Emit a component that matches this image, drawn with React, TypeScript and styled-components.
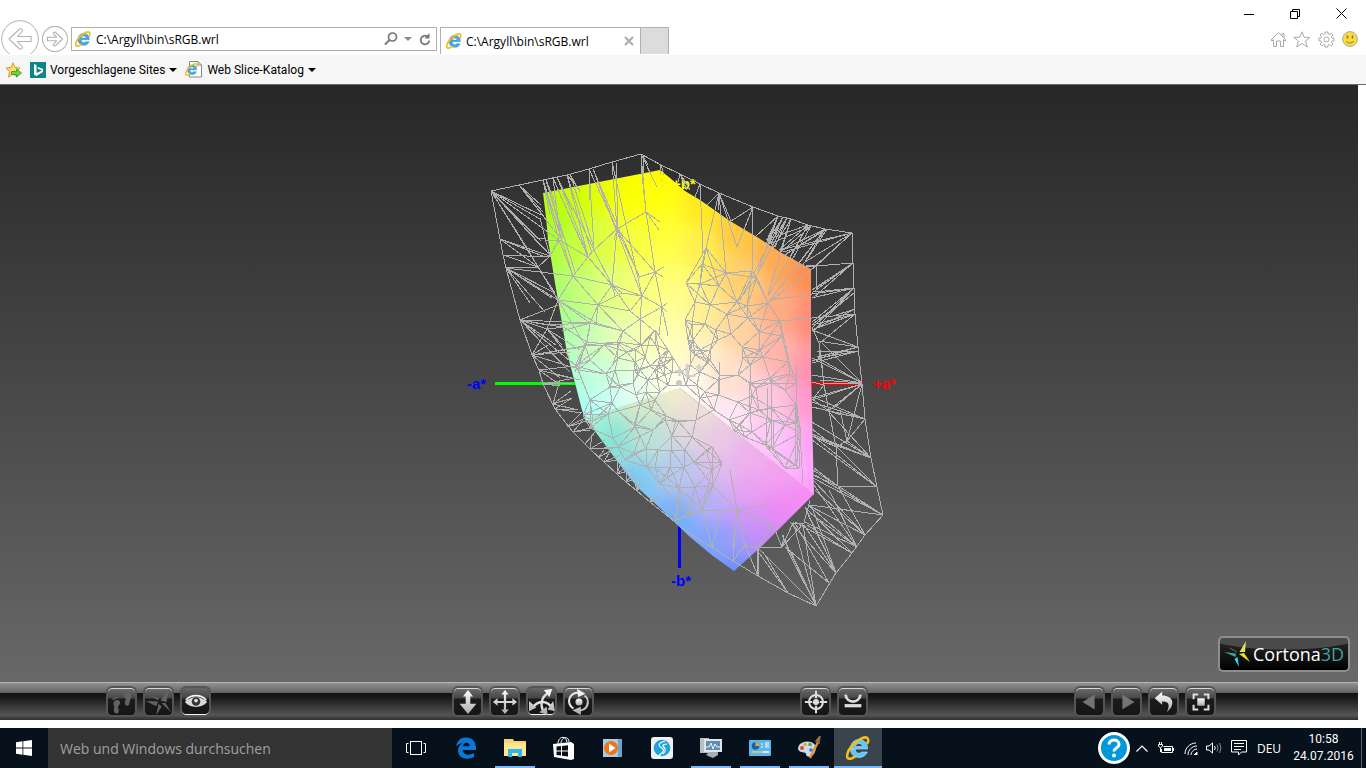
import React from "react";
import styled, { createGlobalStyle, css } from "styled-components";

const GlobalStyle = createGlobalStyle`
  *, *::before, *::after { box-sizing: border-box; }
  html, body { margin: 0; background: #fff; }
  body { font-family: "Open Sans", "Noto Sans", sans-serif; font-size: 12px; color: #000; }
  button, input { font: inherit; color: inherit; margin: 0; padding: 0; border: 0; background: none; }
  button { display: flex; align-items: center; justify-content: center; }
  svg { display: block; flex: none; }
`;

/* ---------- browser chrome ---------- */

const Page = styled.div`
  display: flex;
  flex-direction: column;
  min-height: 100vh;
`;

const Header = styled.header`
  display: flex;
  align-items: flex-start;
  height: 54px;
  margin-bottom: 1px;
  overflow: hidden;
`;

const HistoryButtons = styled.nav`
  display: flex;
  align-items: center;
  gap: 3px;
  padding: 20px 3px 0 1px;
`;

const AddressBar = styled.div`
  display: flex;
  align-items: center;
  gap: 1px;
  flex: 0 1 366px;
  height: 24px;
  margin-top: 27px;
  padding: 0 3px;
  border: 1px solid #b0b0b0;
`;

const AddressInput = styled.input`
  flex: 1;
  min-width: 0;
  margin-left: 4px;
  outline: none;
`;

const AddressTool = styled.button`
  width: 16px;
  height: 22px;
`;

const Tabs = styled.div`
  display: flex;
  flex: 1;
  align-self: stretch;
  margin: 27px 0 0 3px;
`;

const Tab = styled.div`
  display: flex;
  align-items: center;
  gap: 4px;
  width: 201px;
  padding: 0 5px;
  border: 1px solid #b0b0b0;
  border-bottom: 0;
`;

const TabTitle = styled.button`
  flex: 1;
  justify-content: flex-start;
`;

const NewTab = styled.button`
  width: 28px;
  background: #dcdcdc;
  border: solid #b0b0b0;
  border-width: 1px 1px 0 0;
`;

const WindowTools = styled.div`
  display: flex;
  flex-direction: column;
  align-items: flex-end;
`;

const Caption = styled.div`
  display: flex;
  padding-right: 2px;
  button { width: 46px; height: 27px; }
`;

const CommandIcons = styled.div`
  display: flex;
  padding-right: 4px;
  button { width: 24px; height: 24px; }
`;

const FavoritesBar = styled.nav`
  display: flex;
  align-items: center;
  height: 30px;
  padding-left: 5px;
  background: #f6f6f6;
  border-bottom: 1px solid #6a6a6a;
`;

const Favorite = styled.button`
  gap: 4px;
  margin-left: 8px;
  font-family: Roboto, sans-serif;
  white-space: nowrap;
`;

/* ---------- viewer ---------- */

const Plugin = styled.main`
  display: flex;
  flex-direction: column;
  flex: 1;
  margin: 0 8px 8px 0;
`;

const Viewport = styled.section`
  position: relative;
  display: flex;
  align-items: center;
  justify-content: center;
  flex: 1;
  background: linear-gradient(#272727, #686868);
`;

const Brand = styled.a`
  position: absolute;
  right: 8px;
  bottom: 10px;
  display: flex;
  align-items: center;
  gap: 1px;
  width: 132px;
  height: 36px;
  padding-left: 4px;
  border: 2px solid #8e8e8e;
  border-radius: 5px;
  background: radial-gradient(ellipse 90px 20px at 50% -8px, #4a4a4a 96%, transparent), linear-gradient(#2b2b2b, #000);
  color: #fff;
  font: 18px/1 "Open Sans", sans-serif;
  text-decoration: none;
  white-space: nowrap;
  b { font-weight: 400; color: #3fa39b; }
`;

const Toolbar = styled.div`
  display: flex;
  height: 38px;
  padding: 3px 142px 0 106px;
  border-top: 1px solid #b4b4b4;
  background: linear-gradient(#929292, #606060 10px, #121212 10px, #1a1a1a 15px, #555 32px, #303030);
`;

const ToolGroup = styled.div`
  display: flex;
  gap: 6px;
`;

const Spacer = styled.div<{ $grow: number }>`
  flex: ${(p) => p.$grow} 0 0;
`;

const ToolButton = styled.button<{ $pressed?: boolean }>`
  width: 31px;
  height: 31px;
  border: 2px solid #555;
  border-radius: 6px;
  background: linear-gradient(#6e6e6e, #464646 10px, #1b1b1b 11px, #161616);
  box-shadow: inset 0 1px 0 #d8d8d8;
  ${(p) =>
    p.$pressed &&
    css`
      background: linear-gradient(#666, #444 10px, #1b1b1b 11px, #161616);
      box-shadow: inset 0 -1px 0 #f4f4f4;
    `}
`;

/* ---------- taskbar ---------- */

const Taskbar = styled.footer`
  display: flex;
  height: 40px;
  background: #06111b;
  color: #fff;
`;

const StartButton = styled.button`
  width: 48px;
`;

const Search = styled.input`
  flex: 0 1 344px;
  min-width: 0;
  padding: 0 12px;
  background: #333;
  font: 14px "Open Sans", sans-serif;
  outline: none;
  &::placeholder { color: #a0a0a0; opacity: 1; }
`;

const Apps = styled.div`
  display: flex;
  gap: 1px;
  flex: 1;
`;

const AppButton = styled.button<{ $running?: boolean; $active?: boolean }>`
  position: relative;
  width: 48px;
  background: ${(p) => (p.$active ? "#39444d" : "transparent")};
  &:first-child { margin-right: 1px; }
  &::after {
    content: "";
    position: absolute;
    bottom: 0;
    left: ${(p) => (p.$active ? 0 : 4)}px;
    right: ${(p) => (p.$active ? 0 : 4)}px;
    height: ${(p) => (p.$running || p.$active ? 2 : 0)}px;
    background: #76b9ff;
  }
`;

const Tray = styled.div`
  display: flex;
  align-items: center;
`;

const TrayButton = styled.button<{ $width?: number }>`
  width: ${(p) => p.$width ?? 24}px;
  height: 40px;
`;

const Clock = styled.time`
  width: 75px;
  margin-left: 2px;
  font: 12px/17px Roboto, sans-serif;
  text-align: center;
  white-space: nowrap;
`;

const ShowDesktop = styled.button`
  width: 5px;
  height: 40px;
  border-left: 1px solid #59636b;
`;

/* ---------- icons ---------- */

const IeIcon = ({ size = 16, bright = false }: { size?: number; bright?: boolean }) => (
  <svg width={size} height={size} viewBox="0 0 24 24" fill="none">
    <path d="M4.500 13H21.500C22 7 18 3.500 13 3.500C8 3.500 4.500 7.500 4.500 12.500C4.500 18 8 21.500 13 21.500C17 21.500 20 19.500 21.300 16H15.800C13 18.500 9.500 17 9.300 13.500Z M9.400 10.500C10 6.500 16 6.500 16.600 10.500Z" fillRule="evenodd" fill={bright ? "#5cc8f6" : "#4aa8e4"} stroke={bright ? "#bdeaff" : "#2b86c8"} strokeWidth=".6" />
    <path d="M21.500 7C23.500 2.500 21 .3 16.500 2C10.500 4.300 2.500 12 1.200 18.500C.2 23.500 4.500 24 9 20.500" stroke="#f4bd1c" strokeWidth="2.600" strokeLinecap="round" />
  </svg>
);

const ArrowCircle = ({ size, flip }: { size: number; flip?: boolean }) => (
  <svg width={size} height={size} viewBox="0 0 38 38" fill="none" stroke="#b2b2b2">
    <circle cx="19" cy="19" r="18.300" strokeWidth={size < 30 ? 1.500 : 1} />
    <path transform={flip ? "translate(38 0) scale(-1 1)" : undefined} strokeWidth={size < 30 ? 1.600 : 1.100} strokeLinejoin="round" d="M8 19L18 9.500C20 7.800 22.500 9.500 21 11.500L16.500 16.500H30V21.500H16.500L21 26.500C22.500 28.500 20 30.200 18 28.500Z" />
  </svg>
);

const Caret = ({ color }: { color: string }) => (
  <svg width="8" height="4" viewBox="0 0 8 4"><path d="M0 0H8L4 4Z" fill={color} /></svg>
);

const steel = "url(#steel)";

const FourWay = "M14 1L18 6H15.200V12.800H22V10L27 14L22 18V15.200H15.200V22H18L14 27L10 22H12.800V15.200H6V18L1 14L6 10V12.800H12.800V6H10Z";

const tools: Record<string, React.ReactNode> = {
  walk: (
    <g fill="#626262">
      <path d="M16 5C19 2 24 3 24 8C24 11 22 12 22 15C22 19 17 19 17 15C17 12 20 11 16 8Z" />
      <path d="M5 14C7 11 12 11 12 15C11 18 9 18 10 21C12 26 8 28 6 25C4 22 7 20 5 17Z" />
      <circle cx="15.500" cy="3" r="1.200" /><circle cx="18.500" cy="1.600" r="1.200" /><circle cx="5" cy="11" r="1.200" /><circle cx="8" cy="9.800" r="1.200" />
    </g>
  ),
  fly: (
    <g fill="#626262">
      <path d="M15.500 12.500L25 0L22 14Z" /><path d="M13 13.500L0 13L11 18.500Z" /><path d="M13.500 16L11 28L17 19Z" /><path d="M16.500 15L27 25L21 15Z" /><path d="M13 12L4 7L14 10Z" />
    </g>
  ),
  study: (
    <g>
      <path d="M2 14C8 7 20 7 26 14C20 21 8 21 2 14Z" fill="#d8d8d8" /><path d="M3 12C8 5.500 20 5.500 25 12" fill="none" stroke="#f4f4f4" strokeWidth="1.800" />
      <circle cx="14" cy="13.500" r="4.600" fill="#333" /><circle cx="14" cy="12.500" r="2" fill="#ddd" />
    </g>
  ),
  plan: <path d="M14 1L19.500 8H16.500V16H23L14 27L5 16H11.500V8H8.500Z" fill={steel} />,
  pan: <path d={FourWay} fill={steel} />,
  turn: (
    <g>
      <path d="M21 4C14 8 11 16 16 25" fill="none" stroke="#e0e0e0" strokeWidth="2.600" />
      <path d="M4 20C9 13 18 11 25 20" fill="none" stroke="#e0e0e0" strokeWidth="2.600" />
      <path d="M16 1L25 0L22 9Z M0 13L8 20L0 24Z M20 22L26 13L28 24Z M11 25L19 19L20 28Z" fill={steel} />
    </g>
  ),
  roll: (
    <g>
      <circle cx="14" cy="14" r="3.800" fill={steel} />
      <path d="M15 4.500A9 9 0 0 0 8 21" fill="none" stroke="#e8e8e8" strokeWidth="2.200" /><path d="M13 23A9 9 0 0 0 20 7" fill="none" stroke="#c8c8c8" strokeWidth="2.200" />
      <path d="M12 0L21 5L13 9Z M16 19L7 23L16 28Z" fill={steel} />
    </g>
  ),
  goto: (
    <g fill="none" stroke="#ddd" strokeWidth="2.200">
      <circle cx="14" cy="14" r="7.500" /><path d="M14 2V10M14 18V26M2 14H10M18 14H26" /><circle cx="14" cy="14" r="2.200" fill="#ddd" />
    </g>
  ),
  align: <g fill="none" stroke="#ddd"><path d="M6 6C7 16 21 16 22 6" strokeWidth="3" /><path d="M5 18H23" strokeWidth="3.500" /></g>,
  prev: <path d="M6 14L19 6V22Z" fill="#747474" />,
  next: <path d="M22 14L9 6V22Z" fill="#747474" />,
  undo: <path d="M4 10L12 3V7C24 7 27 17 17 25C21 17 19 13 12 13.500V17Z" fill={steel} />,
  fit: <g><path d="M6 11V6H11M17 6H22V11M22 17V22H17M11 22H6V17" fill="none" stroke="#ddd" strokeWidth="2.200" /><rect x="10" y="10" width="8" height="8" fill={steel} /></g>,
};

const Tool = ({ name, label, pressed, disabled }: { name: string; label: string; pressed?: boolean; disabled?: boolean }) => (
  <ToolButton $pressed={pressed} aria-label={label} disabled={disabled}>
    <svg width="26" height="26" viewBox="0 0 28 28">{tools[name]}</svg>
  </ToolButton>
);

/* ---------- gamut scene ---------- */

type Sample = [number, number, string];

/* Colours on the ridge that the yellow and the orange face share. */
const ridge: Sample[] = [
  [662, 175, "fffa00"], [664, 200, "ffff10"], [667, 225, "ffff30"], [670, 250, "ffff4c"], [672, 275, "ffff70"],
  [674, 300, "ffff90"], [676, 325, "ffffa8"], [677, 350, "ffffc4"], [679, 385, "fffff0"],
];

const faces: { id: string; outline: string; box: [number, number, number, number]; samples: Sample[] }[] = [
  {
    id: "yellow-green",
    box: [535, 160, 690, 430],
    outline: "543,193 660,170 665,200 681,388 586,420 582,410 575,383 567,353 562,323 555,283 548,240 546,217",
    samples: [
      ...ridge,
      [545, 195, "b8ff00"], [570, 190, "ccff00"], [600, 185, "e8ff00"], [630, 180, "f8ff00"], [640, 200, "ffff08"],
      [548, 220, "acff18"], [548, 245, "a8ff38"], [575, 245, "c4ff40"], [600, 240, "deff44"], [630, 240, "f6ff40"],
      [556, 290, "a8ff70"], [582, 290, "c8ff78"], [610, 290, "e4ff80"], [640, 290, "f8ff78"], [562, 320, "aaff94"],
      [565, 345, "aeffb4"], [592, 345, "ccffb8"], [620, 340, "e8ffb8"], [648, 340, "faffb0"], [575, 380, "acffd8"],
      [583, 410, "a4fff8"], [600, 375, "ccffdc"], [605, 402, "c4fff8"], [635, 392, "e4fff0"], [655, 375, "f8ffe0"],
    ],
  },
  {
    id: "orange-pink",
    box: [655, 160, 820, 500],
    outline: "660,170 670,178 685,191 700,200 730,221 757,237 780,252 811,269 811,370 814,495 680,388 664,200",
    samples: [
      ...ridge,
      [700, 205, "ffe820"], [740, 230, "ffc840"], [780, 255, "ffa850"], [810, 272, "ff8c50"], [811, 320, "ff8878"],
      [811, 370, "ff90b0"], [811, 400, "ff98d0"], [812, 450, "ffa0f8"], [812, 485, "ffa0ff"], [695, 250, "fff050"],
      [740, 280, "ffd070"], [780, 310, "ffac80"], [700, 310, "ffee90"], [740, 330, "ffd4a0"], [780, 350, "ffb4a8"],
      [700, 355, "fff0cc"], [730, 380, "ffe0d0"], [770, 400, "ffc8e0"], [692, 388, "fff8f0"], [730, 415, "ffe8f8"],
      [770, 440, "ffc8fc"], [790, 462, "ffb8ff"],
    ],
  },
  {
    id: "blue-magenta",
    box: [575, 380, 825, 580],
    outline: "680,388 814,494 800,508 780,528 763,545 734,571 713,556 690,537 670,518 660,508 637,487 617,461 603,442 585,418",
    samples: [
      [590, 420, "a0f4d4"], [640, 402, "d0ecc8"], [675, 392, "f0eccc"], [700, 405, "f2e0d8"], [610, 445, "84e4d8"],
      [650, 440, "b8e4d8"], [690, 430, "e4d8dc"], [635, 482, "7cc8f4"], [680, 470, "b8c8f0"], [720, 440, "ecc8e4"],
      [675, 520, "70b0fc"], [710, 500, "b8b0f8"], [720, 470, "e0bcee"], [750, 460, "f0b0ec"], [780, 475, "f4a0f0"],
      [750, 490, "eca0f2"], [812, 494, "f68cf4"], [780, 510, "f088f4"], [750, 520, "d494f8"], [710, 545, "7ca4fc"],
      [734, 568, "6c90fc"], [765, 540, "c488f8"], [735, 540, "9c9cfa"],
    ],
  },
];

const CELL = 8;

/* Inverse distance weighting of the colour samples of a face. */
const colourAt = (x: number, y: number, samples: Sample[]) => {
  let total = 0;
  const sum = [0, 0, 0];
  for (const [sx, sy, hex] of samples) {
    const weight = 1 / Math.pow((x - sx) ** 2 + (y - sy) ** 2 + 220, 2.2);
    total += weight;
    for (let i = 0; i < 3; i++) sum[i] += weight * parseInt(hex.slice(i * 2, i * 2 + 2), 16);
  }
  return `rgb(${sum.map((v) => Math.round(v / total)).join(",")})`;
};

const cells = (face: (typeof faces)[number]) => {
  const [x0, y0, x1, y1] = face.box;
  const out: React.ReactNode[] = [];
  for (let y = y0 - CELL; y < y1 + CELL; y += CELL)
    for (let x = x0 - CELL; x < x1 + CELL; x += CELL)
      out.push(<rect key={`${x}-${y}`} x={x} y={y} width={CELL + 1} height={CELL + 1} fill={colourAt(x + CELL / 2, y + CELL / 2, face.samples)} />);
  return out;
};

const hull =
  "M491 191L519 185L543 180L567 175L589 169L612 162L641 154L661 165L680 174L700 184L719 193L753 207L778 216L791 219L808 225L825 229L852 233L853 263L854 288L855 314L858 347L862 384L865 419L871 458L877 487L883 515L865 535L852 553L836 573L816 606L788 593L758 576L733 561L712 547L690 534L675 522L650 502L637 491L626 482L617 474L604 462L590 449L573 432L555 409L543 384L539 370L532 355L520 320L506 268L503 255L500 239Z";

/* Each line is a vertex followed by the vertices that it is joined to. */
const fans = `
491,191 541,215 540,219 538,239 541,241 542,247 538,267 527,248 559,240 550,255
519,185 545,218 560,238 543,212 541,205
500,239 550,256 538,267 527,248 545,257
538,239 546,238
503,255 538,267 551,257
506,268 540,267 558,300 555,293 552,298 573,276 545,312 530,303
538,267 558,300 550,256 527,248 555,293 557,298
545,238 538,239 550,256 540,218
520,320 558,305 547,329 590,323 562,327 575,365 570,372 556,345 547,325
547,329 558,300 532,355 562,345 580,350 570,358 565,327
532,355 548,345 590,345 582,347 570,352 575,368 560,378
539,370 575,366 560,385 580,380 570,378
543,180 559,240 573,276 550,215 562,240
546,180 563,238 575,272 556,205
553,178 588,257 580,240 560,236
557,177 588,255 594,250 572,210
567,175 592,253 588,257 580,190
570,174 594,248 580,192 577,187
589,169 594,248 617,229 590,200
593,169 616,230 642,296 640,278
612,162 617,229 642,296
616,162 618,228
641,154 641,173 646,212 657,187
643,156 643,175 648,165
617,229 612,285 646,212 594,250 640,278 655,272 614,240
646,212 660,222 659,230 655,272 642,175
655,272 664,267 663,277 642,296 639,277 662,307
559,240 550,256 573,276 545,241 588,257 553,250
594,250 588,257 612,285
588,257 573,276 612,285
573,276 612,285 558,300 598,305
612,285 598,305 630,311 642,296 622,293 615,296
598,305 558,300 622,293 590,323 596,323 630,311 623,331
642,296 630,311 640,319 662,307 622,293
662,307 640,319 667,303 667,312 659,335 668,336
640,319 630,311 623,331 641,345 659,335
558,300 547,329 590,323 585,345 596,323
590,323 596,323 623,331 587,340 547,325 562,331
587,342 582,347 590,325 618,345 578,365 560,325 575,372
623,331 617,342 613,365 641,345 596,323
661,165 660,170 664,175
680,174 684,183 687,190 690,190 678,182
700,184 695,197 703,253 701,200
719,193 707,205 706,248 726,273 737,247 731,221 718,210
753,207 731,221 737,247 752,271
778,216 755,237 767,240 769,243 758,271 766,244
783,217 767,242 771,245 740,300
787,218 770,244 775,247 757,275
791,219 773,248 780,252 768,295
808,225 766,240 779,250 790,258 768,296
811,226 770,244 792,260 781,252
825,229 782,250 800,262 803,265 768,303 785,255
827,229 786,254 808,258
852,233 783,252 779,250 814,267 816,266 805,262
816,266 816,290 853,263 806,265 768,303 797,266
853,263 812,290 812,293 813,298 816,288
854,288 812,298 815,292 812,322 812,328 813,332 770,300
854,293 813,324 818,322
855,314 812,325 812,330 780,321 814,329 820,343
855,309 812,330 830,317
858,347 818,341 812,330 817,357 818,357 812,361
859,351 818,358 812,363 817,352
862,383 820,380 824,384 812,375 818,358 812,358 822,343
819,343 812,327 820,360 823,372 824,385
824,385 829,412 812,382 812,400
862,384 828,411 833,409 847,441 812,400 812,398
865,419 828,411 812,402 812,407 847,441 813,397
829,411 836,447 812,399 841,415
841,415 847,441 840,410
871,458 835,445 812,434 813,436 847,441 828,411 812,422
836,447 838,486 812,436 812,429 847,441
877,487 835,445 812,435 838,486 812,440 837,447
838,486 814,468 813,475
883,515 838,486 813,478 813,470 810,505 815,475
865,535 813,480 838,486 815,490 808,505
857,547 814,485 808,505 810,513 829,490 805,522
852,553 805,507 795,522 808,510 807,525
836,573 805,507 804,525 790,522 808,515 813,510
829,583 785,547 795,523
816,606 758,548 762,552 790,550 786,547 793,522 782,535 803,525
788,593 757,550 763,552
758,576 758,549 745,545 757,548
804,523 810,500 793,523 782,547
782,547 758,548 793,523 773,525 784,535
758,548 745,545 773,525
733,561 745,545 737,510 734,530
737,510 765,505 773,525 745,545 713,486 730,470 702,510 733,560
712,547 702,510 721,510 706,525
677,520 688,514 679,488 702,510 668,505
679,488 660,484 695,487 713,486 684,467 670,467 688,514
543,384 575,378 572,383 560,386 553,384
553,404 571,391 578,410 572,398 560,380
555,409 578,410 582,413 572,398
567,427 582,412 585,418 590,420
573,432 590,430 583,420 595,427
585,444 592,436 595,432
590,449 613,448 592,435 605,440 618,447
599,457 604,450 612,450
604,462 618,460 610,451 620,455
617,474 617,461 622,460 632,470 625,468
626,482 627,472 632,475 637,478
637,491 635,482 642,485 640,480
650,502 650,495 655,500 658,496
675,522 663,512 679,488
`;

/* Crowded vertices of the inner mesh, joined to their closest neighbours. */
const crowd = `
706,248 702,264 700,284 726,273 752,271 757,278 719,286 737,302 727,314 705,324 695,302 710,305 686,283 768,303
748,318 747,306 759,332 780,321 782,336 716,330 718,340 731,334 693,340 692,325 742,347 760,350 743,358 763,357
710,360 788,362 790,374 770,378 750,365 718,380 700,350 688,340 690,350 685,320 718,395 750,383 752,396 756,388
771,383 771,408 797,383 796,405 750,413 729,420 714,410 700,398 771,420 797,423 801,433 772,448 765,445 752,432
745,437 796,465 785,468 799,468 740,425 759,410 720,375 734,430 690,365 700,372 707,362 688,378 697,385 705,392
710,350 695,355 575,366 578,370 606,374 610,387 612,403 634,370 638,375 633,383 636,395 640,405 655,370 657,378
651,410 666,416 665,420 634,424 635,427 618,411 618,447 593,421 583,415 613,438 634,453 646,449 658,450 647,467
670,467 671,450 660,484 679,488 676,420 590,428 625,460 655,468 679,422 696,420 685,450 706,450 712,470
694,462 712,447 684,467 695,487 713,486 702,510 688,514 722,463 617,342
641,345 645,357 660,357 650,337 656,345 636,350 635,362 640,370 650,366 658,365 618,358 615,370 585,345 590,360
604,345 668,350 673,358 672,372 665,375 648,380 627,352 655,330 620,387 590,400 646,392 660,392 668,385
738,375 738,402 785,390 785,425 640,436 653,430 692,437 667,478 655,400 608,414 672,436
682,372 686,385 664,366
`;

/* Near-vertical doubled edges on the pink side. */
const strands = "M796 365V405L795 464M798 405L797 462M771 378V420M768 388L767 418L766 448M800 433L803 484M773 420V446M750 383L749 412M719 362V394M780 321L790 365L797 383";

const parse = (text: string) => text.trim().split(/\s+/).map((p) => p.split(",").map(Number));

const fanPath = fans
  .trim()
  .split("\n")
  .map((line) => {
    const [[hx, hy], ...ends] = parse(line);
    return ends.map(([x, y]) => `M${hx} ${hy}L${x} ${y}`).join("");
  })
  .join("");

const crowdPath = (() => {
  const points = parse(crowd);
  const seen = new Set<string>();
  let d = "";
  points.forEach(([x, y], i) => {
    points
      .map(([px, py], j) => ({ px, py, j, r: Math.hypot(px - x, py - y) }))
      .filter(({ px, py, j, r }) => j !== i && r < 42 && !(py < 350 && (px - 677) * (x - 677) < 0))
      .sort((a, b) => a.r - b.r)
      .slice(0, 5)
      .forEach(({ px, py, j }) => {
        const key = i < j ? `${i}-${j}` : `${j}-${i}`;
        if (seen.has(key)) return;
        seen.add(key);
        d += `M${x} ${y}L${px} ${py}`;
      });
  });
  return d;
})();

const AxisLabel = styled.text`
  font: bold 15px "Liberation Sans", sans-serif;
`;

const LightnessLabel = styled.text`
  font: bold 18px "Liberation Sans", sans-serif;
`;

const Gamut = () => (
  <svg width="440" height="481" viewBox="459 143 440 481" role="img" aria-label="sRGB gamut in L*a*b*">
    <defs>
      <filter id="smooth" x="-5%" y="-5%" width="110%" height="110%" colorInterpolationFilters="sRGB"><feGaussianBlur stdDeviation="5" /></filter>
      {faces.map((f) => (
        <clipPath id={f.id} key={f.id}><polygon points={f.outline} /></clipPath>
      ))}
    </defs>
    <AxisLabel x="672" y="189" fill="#ff0">+b*</AxisLabel>
    <rect x="495" y="382" width="90" height="3" fill="#0f0" />
    <rect x="800" y="382" width="63" height="3" fill="#f00" />
    <rect x="678" y="500" width="3" height="68" fill="#00f" />
    {faces.map((f) => (
      <g clipPath={`url(#${f.id})`} key={f.id}>
        <g filter="url(#smooth)">{cells(f)}</g>
      </g>
    ))}
    <path d={hull + fanPath + crowdPath + strands} fill="none" stroke="#b0b0b0" shapeRendering="crispEdges" />
    <circle cx="679" cy="383" r="3" fill="#c8c8c8" />
    <AxisLabel x="467" y="389" fill="#00f">-a*</AxisLabel>
    <AxisLabel x="873" y="389" fill="#f00">+a*</AxisLabel>
    <AxisLabel x="671" y="586" fill="#00f">-b*</AxisLabel>
    <LightnessLabel x="674" y="377" fill="#d0d0d0">+L*</LightnessLabel>
  </svg>
);

/* ---------- page ---------- */

export default function App() {
  return (
    <>
      <GlobalStyle />
      <Page>
        <Header>
          <HistoryButtons aria-label="Verlauf">
            <button aria-label="Zurück"><ArrowCircle size={38} /></button>
            <button aria-label="Vorwärts"><ArrowCircle size={26} flip /></button>
          </HistoryButtons>
          <AddressBar>
            <IeIcon />
            <AddressInput aria-label="Adresse" defaultValue="C:\Argyll\bin\sRGB.wrl" />
            <AddressTool aria-label="Suchen">
              <svg width="14" height="14" viewBox="0 0 14 14" fill="none" stroke="#777" strokeWidth="1.700"><circle cx="8.500" cy="5" r="4" /><path d="M5.500 8L1 12.500" strokeWidth="2" /></svg>
            </AddressTool>
            <AddressTool aria-label="Verlauf anzeigen"><Caret color="#888" /></AddressTool>
            <AddressTool aria-label="Aktualisieren">
              <svg width="12" height="13" viewBox="0 0 12 13"><path d="M8.500 3.500A4.300 4.300 0 1 0 10.300 7.500" fill="none" stroke="#777" strokeWidth="1.800" /><path d="M10.500 0V5.500H5.500Z" fill="#777" /></svg>
            </AddressTool>
          </AddressBar>
          <Tabs>
            <Tab>
              <IeIcon />
              <TabTitle>C:\Argyll\bin\sRGB.wrl</TabTitle>
              <button aria-label="Tab schließen">
                <svg width="12" height="10" viewBox="0 0 12 10" stroke="#aaa" strokeWidth="2"><path d="M2 1L10 9M10 1L2 9" /></svg>
              </button>
            </Tab>
            <NewTab aria-label="Neuer Tab" />
          </Tabs>
          <WindowTools>
            <Caption>
              <button aria-label="Minimieren"><svg width="10" height="10"><path d="M0 5.500H10" stroke="#000" /></svg></button>
              <button aria-label="Verkleinern"><svg width="10" height="10" fill="none" stroke="#000"><path d="M.5 2.500H7.500V9.500H.5ZM2.500 2.500V.5H9.500V7.500H7.500" /></svg></button>
              <button aria-label="Schließen"><svg width="11" height="11" stroke="#000"><path d="M.5 .5L10.500 10.500M10.500 .5L.5 10.500" /></svg></button>
            </Caption>
            <CommandIcons>
              <button aria-label="Startseite"><svg width="17" height="17" viewBox="0 0 17 17" fill="none" stroke="#aaa"><path d="M1 9L8.500 1.500L16 9L15 10L13.500 8.500V15.500H10.500V10H6.500V15.500H3.500V8.500L2 10ZM12 4.500V2.500H14V7" /></svg></button>
              <button aria-label="Favoriten"><svg width="18" height="17" viewBox="0 0 18 17" fill="none" stroke="#aaa"><path d="M9 .8L11.200 6.300H17.200L12.500 10L14.300 16L9 12.500L3.700 16L5.500 10L.8 6.300H6.800Z" /></svg></button>
              <button aria-label="Extras"><svg width="17" height="17" viewBox="0 0 17 17" fill="none" stroke="#aaa"><path d="M7 1H10V3L11.500 3.500L13 2L15 4L13.500 5.500L14 7H16V10H14L13.500 11.500L15 13L13 15L11.500 13.500L10 14V16H7V14L5.500 13.500L4 15L2 13L3.500 11.500L3 10H1V7H3L3.500 5.500L2 4L4 2L5.500 3.500L7 3Z" /><circle cx="8.500" cy="8.500" r="2.500" /></svg></button>
              <button aria-label="Feedback"><svg width="16" height="16" viewBox="0 0 16 16"><circle cx="8" cy="8" r="7.400" fill="#ffdc3c" stroke="#a8a8a8" /><path d="M5.500 4.500V7.500M10.500 4.500V7.500" stroke="#8a7440" strokeWidth="1.600" /><path d="M4 10C6 12.600 10 12.600 12 10" fill="none" stroke="#8a7440" /></svg></button>
            </CommandIcons>
          </WindowTools>
        </Header>

        <FavoritesBar aria-label="Favoritenleiste">
          <button aria-label="Zu Favoriten hinzufügen">
            <svg width="17" height="16" viewBox="0 0 17 16"><path d="M8 .8L10 5.500L15 6L11.500 9.500L12.500 15L8 12.200L3.500 15L4.500 9.500L1 6L6 5.500Z" fill="#fbdc6a" stroke="#d49a28" /><path d="M6.500 9.500H11.500V7L16.500 11L11.500 15V12.500H6.500Z" fill="#6bd44e" stroke="#2e9a20" strokeWidth=".8" /></svg>
          </button>
          <Favorite>
            <svg width="16" height="16" viewBox="0 0 16 16"><rect width="16" height="16" fill="#0f8686" /><path d="M4 2L6.500 3V11L12 8.500L7.500 6.500L8 5L13 7V10L6.500 14L4 12.500Z" fill="#fff" /></svg>
            Vorgeschlagene Sites
            <Caret color="#000" />
          </Favorite>
          <Favorite>
            <svg width="18" height="17" viewBox="0 0 18 17"><path d="M4.500 .5H13L16.500 4V16H4.500Z" fill="#fff" stroke="#888" /><path d="M13 .5V4H16.500" fill="none" stroke="#888" /><svg y="2" width="13" height="13"><IeIcon size={13} /></svg></svg>
            Web Slice-Katalog
            <Caret color="#000" />
          </Favorite>
        </FavoritesBar>

        <Plugin>
          <Viewport>
            <Gamut />
            <Brand href="#cortona">
              <svg width="28" height="28" viewBox="0 0 28 28">
                <path d="M0 12L12 13.500L11.500 17Z" fill="#35a39c" /><path d="M13.500 17L15 27L10.500 19Z" fill="#35d8e0" /><path d="M15.500 12L22 1L21 12Z" fill="#d8e84a" /><path d="M15 14L20 13L26 22Z" fill="#f2e21c" /><path d="M6 8L13 12" stroke="#666" />
              </svg>
              <span>Cortona<b>3D</b></span>
            </Brand>
          </Viewport>
          <Toolbar role="toolbar">
            <svg width="0" height="0" aria-hidden="true">
              <linearGradient id="steel" x1="0" y1="0" x2="0" y2="1"><stop stopColor="#fff" /><stop offset="1" stopColor="#aaa" /></linearGradient>
            </svg>
            <ToolGroup>
              <Tool name="walk" label="Walk" disabled />
              <Tool name="fly" label="Fly" disabled />
              <Tool name="study" label="Study" pressed />
            </ToolGroup>
            <Spacer $grow={241} />
            <ToolGroup>
              <Tool name="plan" label="Plan" />
              <Tool name="pan" label="Pan" />
              <Tool name="turn" label="Turn" pressed />
              <Tool name="roll" label="Roll" />
            </ToolGroup>
            <Spacer $grow={206} />
            <ToolGroup>
              <Tool name="goto" label="Go to" />
              <Tool name="align" label="Align" />
            </ToolGroup>
            <Spacer $grow={206} />
            <ToolGroup>
              <Tool name="prev" label="Previous view" disabled />
              <Tool name="next" label="Next view" disabled />
              <Tool name="undo" label="Restore" />
              <Tool name="fit" label="Fit" />
            </ToolGroup>
          </Toolbar>
        </Plugin>

        <Taskbar>
          <StartButton aria-label="Start">
            <svg width="16" height="16" viewBox="0 0 16 16" fill="#fff"><path d="M0 2.200L6.500 1.300V7.500H0ZM7.300 1.200L16 0V7.500H7.300ZM0 8.400H6.500V14.700L0 13.800ZM7.300 8.400H16V16L7.300 14.800Z" /></svg>
          </StartButton>
          <Search aria-label="Suche" placeholder="Web und Windows durchsuchen" />
          <Apps>
            <AppButton aria-label="Aktive Anwendungen">
              <svg width="22" height="14" viewBox="0 0 22 14" fill="none" stroke="#fff"><rect x="5.500" y=".5" width="11" height="13" /><path d="M3.500 2.500H1.500V11.500H3.500M18.500 2.500H20.500V11.500H18.500" /></svg>
            </AppButton>
            <AppButton aria-label="Edge">
              <svg width="22" height="22" viewBox="0 0 22 22"><path d="M1 10C2 3.500 6 .5 11 .5C17.500 .5 21 5 21 11V13H7.500C8 18 14 19 19 16V20C12 23.500 3 21.500 3 13.500C3 10 5 7.500 8 6C4.500 6.500 2 8 1 10ZM7.800 9.200H14.800C14.800 4.500 8.500 4.500 7.800 9.200Z" fill="#0a78d7" fillRule="evenodd" /></svg>
            </AppButton>
            <AppButton aria-label="Explorer" $running>
              <svg width="22" height="18" viewBox="0 0 22 18"><path d="M0 0H9L10 2H22V17H0Z" fill="#f8d56c" /><path d="M0 4H22V17H0Z" fill="#ffe694" /><path d="M4 18V10H18V18H14V14H8V18Z" fill="#2cb8ee" /></svg>
            </AppButton>
            <AppButton aria-label="Store">
              <svg width="22" height="24" viewBox="0 0 22 24"><path d="M0 8L18 6L21 8V23L18 24L1 21Z" fill="#fff" /><path d="M5 8C5 0 13 -1 14 6M8 7C9 0 16 0 16 6" fill="none" stroke="#fff" /><path d="M3.500 10.500L8 10V14.500H3.500ZM9 10L15 9.300V14.500H9ZM3.500 15.500H8V19.500L3.500 19ZM9 15.500H15V20.500L9 19.700Z" fill="#06111b" /></svg>
            </AppButton>
            <AppButton aria-label="Media Player">
              <svg width="22" height="20" viewBox="0 0 22 20"><path d="M1 1H20V19H1Z" fill="#6aa5cc" /><path d="M1 1H16V19H1Z" fill="#a9cde2" /><circle cx="9" cy="10" r="7" fill="#ee7518" /><path d="M7 5.500L13.500 10L7 14.500Z" fill="#fff" /></svg>
            </AppButton>
            <AppButton aria-label="Konverter">
              <svg width="22" height="22" viewBox="0 0 22 22"><rect width="22" height="22" rx="3" fill="#f0f0f0" /><circle cx="11" cy="11" r="8.300" fill="#1fa3d8" /><path d="M14 4C10 5 7 7 8.500 9C10 11 13 11 12.500 13.500C12 16 9 17 8 19M16 7C13 7 11 8 12.500 9.500C15 12 15 14 12 17" fill="none" stroke="#fff" strokeWidth="1.200" /></svg>
            </AppButton>
            <AppButton aria-label="Monitor" $running>
              <svg width="24" height="22" viewBox="0 0 24 22"><path d="M1 1H10V16H1Z" fill="#b8bec2" /><path d="M5 2H23V15H5Z" fill="#e2e5e6" /><path d="M7 4H21V13H7Z" fill="#5f8db4" /><path d="M7 10H10L12 6L14 12L16 7L18 10H21" fill="none" stroke="#e8faff" /><path d="M10 15H19V18L14 21L7 18Z" fill="#a8adb0" /></svg>
            </AppButton>
            <AppButton aria-label="Systemsteuerung" $running>
              <svg width="22" height="16" viewBox="0 0 22 16"><rect width="22" height="16" rx="1" fill="#5ab6ef" /><circle cx="6.500" cy="6" r="3.800" fill="#1765a8" /><path d="M6.500 6V2.200A3.800 3.800 0 0 1 10.300 6Z" fill="#f6a735" /><path d="M12 4H14M12 7H14M16 3H20M16 5H20M16 7H20" stroke="#fff" /><path d="M3 12H14" stroke="#f6c94e" strokeWidth="1.500" /><path d="M14 12H20" stroke="#fff" strokeWidth="1.500" /></svg>
            </AppButton>
            <AppButton aria-label="Paint" $running>
              <svg width="24" height="24" viewBox="0 0 24 24"><path d="M1 13C1 7 8 4 14 6C20 8 20 15 16 19C13 22 9 21 9 18C9 15 3 18 1 13Z" fill="#c9dcec" /><circle cx="5" cy="12" r="2" fill="#e04c2c" /><circle cx="8" cy="8.500" r="1.800" fill="#f0a820" /><circle cx="13" cy="8.500" r="1.800" fill="#4ea83c" /><circle cx="14" cy="14" r="1.800" fill="#3a72c8" /><path d="M21 6L13 22" stroke="#e89030" strokeWidth="2.400" /><path d="M23 0L19 5L22 7Z" fill="#9a6a40" stroke="#9a6a40" strokeWidth="1.500" /></svg>
            </AppButton>
            <AppButton aria-label="Internet Explorer" $active><IeIcon size={24} bright /></AppButton>
          </Apps>
          <Tray>
            <TrayButton $width={32} aria-label="Hilfe">
              <svg width="32" height="32" viewBox="0 0 32 32"><circle cx="16" cy="16" r="14.500" fill="#0097db" stroke="#fff" strokeWidth="3" /><path d="M11 12.500C11 6.500 21 6.500 21 12.500C21 16 16 15.500 16 19.500" fill="none" stroke="#fff" strokeWidth="3" /><circle cx="16" cy="23.500" r="2" fill="#fff" /></svg>
            </TrayButton>
            <TrayButton aria-label="Ausgeblendete Symbole"><svg width="12" height="7" viewBox="0 0 12 7"><path d="M.5 6.500L6 1L11.500 6.500" fill="none" stroke="#fff" strokeWidth="1.200" /></svg></TrayButton>
            <TrayButton aria-label="Akku"><svg width="16" height="12" viewBox="0 0 16 12"><path d="M5.500 4.500H14.500V10.500H3.500V7" fill="none" stroke="#fff" /><path d="M6 6H13V9H6ZM15 6H16V9H15Z" fill="#fff" /><path d="M1.500 0V2M3.500 0V2M.5 2.500H4.500V4L2.500 6L.5 4ZM2.500 6V10" fill="none" stroke="#fff" /></svg></TrayButton>
            <TrayButton $width={26} aria-label="Netzwerk"><svg width="14" height="13" viewBox="0 0 14 13" fill="none" stroke="#fff"><path d="M1 12C1 6 6 1 12 1M4 13C4 8 8 4 13 4M7 13C7 10 10 7 13 7" /><path d="M10 13L13 10V13Z" fill="#fff" /></svg></TrayButton>
            <TrayButton $width={20} aria-label="Lautstärke"><svg width="16" height="12" viewBox="0 0 16 12" fill="none" stroke="#fff"><path d="M.5 4H3L6.500 1V11L3 8H.5Z" /><path d="M8.500 4Q10 6 8.500 8" /><path d="M11 2.500Q13 6 11 9.500M13.500 1Q16.500 6 13.500 11" stroke="#888" /></svg></TrayButton>
            <TrayButton $width={30} aria-label="Info-Center"><svg width="16" height="16" viewBox="0 0 16 16" fill="none" stroke="#fff"><path d="M.5 .5H15.500V12H10.500L7.500 15V12H.5ZM3 3.500H13M3 6.500H13M3 9.500H10" /></svg></TrayButton>
            <TrayButton $width={30}>DEU</TrayButton>
            <Clock dateTime="2016-07-24T10:58">
              10:58
              <br />
              24.07.2016
            </Clock>
            <ShowDesktop aria-label="Desktop anzeigen" />
          </Tray>
        </Taskbar>
      </Page>
    </>
  );
}
